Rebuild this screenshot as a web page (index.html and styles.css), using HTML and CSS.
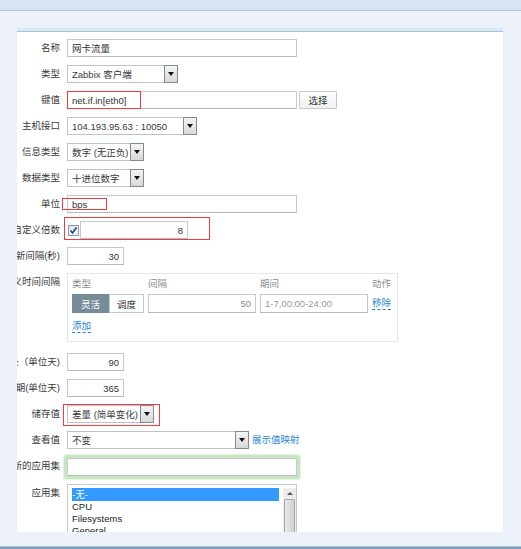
FILE: index.html
```html
<!DOCTYPE html>
<html lang="zh-CN">
<head>
    <meta charset="UTF-8">
    <title>监控项</title>
    <link rel="stylesheet" href="styles.css">
</head>
<body>
    <div class="topbar"></div>
    <div class="page">
        <div class="panel">
            <div class="panel-head"></div>
            <div class="form">
                <div class="row">
                    <div class="label"><span>名称</span></div>
                    <input class="field w-wide" type="text" value="网卡流量">
                </div>
                <div class="row">
                    <div class="label"><span>类型</span></div>
                    <div class="select w-type"><span class="select-text">Zabbix 客户端</span><span class="select-btn"></span></div>
                </div>
                <div class="row">
                    <div class="label"><span>键值</span></div>
                    <input class="field w-wide" type="text" value="net.if.in[eth0]">
                    <button class="btn">选择</button>
                    <div class="mark mark-key"></div>
                </div>
                <div class="row">
                    <div class="label"><span>主机接口</span></div>
                    <div class="select w-host"><span class="select-text">104.193.95.63 : 10050</span><span class="select-btn"></span></div>
                </div>
                <div class="row">
                    <div class="label"><span>信息类型</span></div>
                    <div class="select w-info"><span class="select-text">数字 (无正负)</span><span class="select-btn"></span></div>
                </div>
                <div class="row">
                    <div class="label"><span>数据类型</span></div>
                    <div class="select w-info"><span class="select-text">十进位数字</span><span class="select-btn"></span></div>
                </div>
                <div class="row">
                    <div class="label"><span>单位</span></div>
                    <input class="field w-wide" type="text" value="bps">
                    <div class="mark mark-unit"></div>
                </div>
                <div class="row">
                    <div class="label"><span>使用自定义倍数</span></div>
                    <span class="check">
                        <svg width="9" height="9" viewBox="0 0 9 9"><path d="M1.5 4.5 L3.5 7 L7.5 1.5" fill="none" stroke="#233f94" stroke-width="1.6"/></svg>
                    </span>
                    <input class="field w-mult num" type="text" value="8">
                    <div class="mark mark-mult"></div>
                </div>
                <div class="row">
                    <div class="label"><span>更新间隔(秒)</span></div>
                    <input class="field w-small num" type="text" value="30">
                </div>
                <div class="row row-intervals">
                    <div class="label"><span>自定义时间间隔</span></div>
                    <div class="intervals">
                        <div class="int-grid">
                            <span class="int-head">类型</span>
                            <span class="int-head">间隔</span>
                            <span class="int-head">期间</span>
                            <span class="int-head">动作</span>
                            <div class="seg">
                                <span class="seg-item on">灵活</span>
                                <span class="seg-item">调度</span>
                            </div>
                            <input class="field int-input num muted" type="text" value="50">
                            <input class="field int-input muted" type="text" placeholder="1-7,00:00-24:00">
                            <a class="link dashed" href="#">移除</a>
                        </div>
                        <a class="link dashed add" href="#">添加</a>
                    </div>
                </div>
                <div class="row">
                    <div class="label"><span>历史数据保留时长（单位天)</span></div>
                    <input class="field w-small num" type="text" value="90">
                </div>
                <div class="row">
                    <div class="label"><span>趋势数据存储周期(单位天)</span></div>
                    <input class="field w-small num" type="text" value="365">
                </div>
                <div class="row">
                    <div class="label"><span>储存值</span></div>
                    <div class="select w-store"><span class="select-text">差量 (简单变化)</span><span class="select-btn"></span></div>
                    <div class="mark mark-store"></div>
                </div>
                <div class="row">
                    <div class="label"><span>查看值</span></div>
                    <div class="select w-view"><span class="select-text">不变</span><span class="select-btn"></span></div>
                    <a class="link map-link" href="#">展示值映射</a>
                </div>
                <div class="row">
                    <div class="label"><span>新的应用集</span></div>
                    <input class="field w-wide glow" type="text" value="">
                </div>
                <div class="row">
                    <div class="label"><span>应用集</span></div>
                    <div class="listbox">
                        <div class="list-items">
                            <div class="list-item selected">-无-</div>
                            <div class="list-item">CPU</div>
                            <div class="list-item">Filesystems</div>
                            <div class="list-item">General</div>
                        </div>
                        <div class="scrollbar">
                            <div class="scroll-up"></div>
                            <div class="scroll-thumb"></div>
                        </div>
                    </div>
                </div>
            </div>
        </div>
    </div>
    <div class="footer"></div>
</body>
</html>
```

FILE: styles.css
```css
body {
    margin: 0;
    height: 549px;
    overflow: hidden;
    background: #edf1f9;
    font-family: "Liberation Sans", "Noto Sans CJK SC", sans-serif;
    font-size: 9.5px;
    color: #3a3a3a;
}
.topbar {
    height: 10px;
    background: #d7e4f2;
    border-bottom: 1px solid #b3c7da;
}
.page {
    height: 518px;
    padding: 17px 0 0 17px;
}
.panel {
    width: 486px;
    height: 504px;
    background: #fff;
    overflow: hidden;
}
.panel-head {
    height: 3px;
    background: #d9e6f4;
    border-bottom: 1px solid #aac1d8;
}
.form {
    padding-top: 3px;
}
.row {
    display: flex;
    align-items: flex-start;
    padding: 4px 0;
    position: relative;
}
.label {
    flex: 0 0 43px;
    min-width: 0;
    margin-right: 7px;
    display: flex;
    justify-content: flex-end;
    line-height: 18px;
    white-space: nowrap;
}
.label span {
    flex-shrink: 0;
}
.field {
    box-sizing: border-box;
    height: 18px;
    margin: 0;
    padding: 0 4px;
    border: 1px solid #c3cad0;
    border-bottom-color: #b3bbc2;
    background: #fff;
    font-family: inherit;
    font-size: 9.5px;
    color: #333;
    outline: none;
}
.field::placeholder {
    color: #9a9a9a;
}
.num {
    text-align: right;
}
.muted {
    color: #8a8a8a;
}
.w-wide { width: 230px; }
.w-small { width: 57px; }
.w-mult { width: 108px; }
.btn {
    box-sizing: border-box;
    height: 18px;
    width: 38px;
    margin-left: 2px;
    padding: 0;
    border: 1px solid #c3cad0;
    border-radius: 1px;
    background: linear-gradient(#fdfdfd, #f0f0f0);
    font-family: inherit;
    font-size: 9.5px;
    color: #333;
}
.select {
    box-sizing: border-box;
    height: 18px;
    display: flex;
    align-items: center;
    border: 1px solid #bcc3c9;
    background: #fff;
}
.select-text {
    flex: 1;
    padding-left: 4px;
    white-space: nowrap;
    overflow: hidden;
}
.select-btn {
    box-sizing: border-box;
    width: 14px;
    height: 18px;
    margin: -1px -1px -1px 0;
    border: 1px solid #7f8a92;
    background: linear-gradient(#f4f4f4, #d9d9d9);
    display: flex;
    align-items: center;
    justify-content: center;
}
.select-btn::after {
    content: "";
    border-left: 3px solid transparent;
    border-right: 3px solid transparent;
    border-top: 4px solid #111;
}
.w-type { width: 111px; }
.w-host { width: 130px; }
.w-info { width: 77px; }
.w-store { width: 87px; }
.w-view { width: 182px; }
.check {
    box-sizing: border-box;
    width: 11px;
    height: 11px;
    margin: 4px 1px 0 1px;
    border: 1px solid #8d99a4;
    background: linear-gradient(#dde6ef, #f6f8fa);
    display: flex;
    align-items: center;
    justify-content: center;
}
.mark {
    position: absolute;
    border: 1px solid #f03c3c;
    pointer-events: none;
}
.mark-key { left: 50px; top: 4px; width: 72px; height: 16px; }
.mark-unit { left: 45px; top: 7px; width: 43px; height: 10px; }
.mark-mult { left: 47px; top: 0; width: 144px; height: 21px; }
.mark-store { left: 46px; top: 3px; width: 95px; height: 20px; }
.row-intervals {
    padding-bottom: 7px;
}
.intervals {
    box-sizing: border-box;
    width: 331px;
    height: 69px;
    padding: 4px 5px 0 4px;
    border: 1px solid #e4e7ea;
}
.int-grid {
    display: grid;
    grid-template-columns: 72px 108px 108px auto;
    column-gap: 4px;
    row-gap: 4px;
    align-items: center;
}
.int-head {
    line-height: 12px;
    color: #8c8c8c;
}
.seg {
    display: flex;
    height: 19px;
}
.seg-item {
    box-sizing: border-box;
    flex: 1;
    display: flex;
    align-items: center;
    justify-content: center;
    border: 1px solid #c3cad0;
    background: #fff;
    color: #333;
}
.seg-item.on {
    flex: 0 0 37px;
    background: #768c98;
    border-color: #768c98;
    color: #fff;
}
.int-input {
    width: 100%;
    height: 19px;
}
.link {
    color: #1f86d4;
    text-decoration: none;
}
.dashed {
    justify-self: start;
    line-height: 12px;
    border-bottom: 1px dashed #1f86d4;
}
.add {
    display: inline-block;
    margin-top: 7px;
}
.map-link {
    margin-left: 3px;
    line-height: 18px;
}
.glow {
    margin-top: 1px;
    border-radius: 1px;
    box-shadow: 0 0 0 3px #c9e6c2, 0 0 1px 4px #e3f2e0;
}
.listbox {
    box-sizing: border-box;
    width: 230px;
    height: 64px;
    display: flex;
    gap: 4px;
    padding: 3px 0 0 4px;
    border: 1px solid #c3cad0;
    background: #fff;
    overflow: hidden;
}
.list-items {
    width: 207px;
}
.list-item {
    line-height: 12px;
    color: #222;
    white-space: nowrap;
}
.list-item.selected {
    line-height: 13px;
    background: #3399ff;
    color: #fff;
}
.scrollbar {
    width: 13px;
    background: #ececec;
}
.scroll-up {
    height: 10px;
    display: flex;
    align-items: center;
    justify-content: center;
}
.scroll-up::after {
    content: "";
    border-left: 3px solid transparent;
    border-right: 3px solid transparent;
    border-bottom: 3px solid #555;
}
.scroll-thumb {
    box-sizing: border-box;
    height: 50px;
    margin: 1px 1px 0 1px;
    border: 1px solid #a9a9a9;
    border-radius: 1px;
    background: linear-gradient(90deg, #e9e9e9, #d0d0d0);
}
.footer {
    height: 2px;
    border-top: 1px solid #aac0d2;
    background: #7aa2bc;
}
```
